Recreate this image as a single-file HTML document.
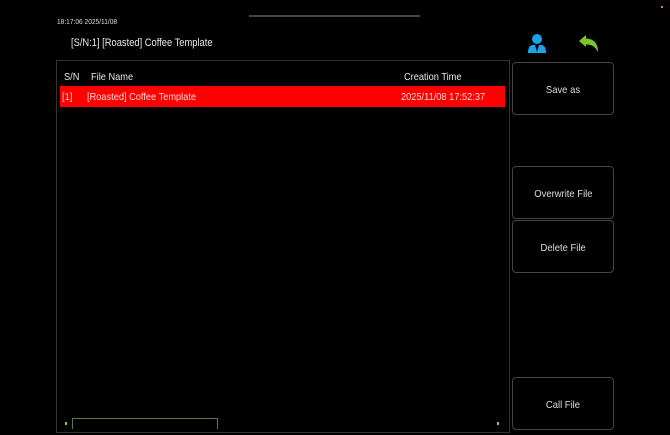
<!DOCTYPE html>
<html><head><style>
body{margin:0;width:670px;height:435px;background:#000;position:relative;overflow:hidden;font-family:"Liberation Sans",sans-serif;color:#e8e8e8}
.a{position:absolute}
.t{font-size:10.5px;transform:scaleX(0.88);transform-origin:left top;white-space:nowrap}
.btn{position:absolute;left:512px;width:100px;border:1px solid #444;border-radius:4px;display:flex;align-items:center;justify-content:center;color:#ddd}
.btn span{font-size:10.5px;transform:scaleX(0.9);display:inline-block;margin-top:2px}
</style></head><body>
<div class="a" style="left:249px;top:15px;width:171px;height:2px;background:#444"></div>
<div class="a" style="left:661px;top:6px;width:2px;height:2px;background:#e08020"></div>
<div class="a" style="left:57px;top:17px;font-size:7.5px;transform:scaleX(0.88);transform-origin:left top;color:#ddd;white-space:nowrap">18:17:06 2025/11/08</div>
<div class="a t" style="left:71px;top:37px;font-size:11px;transform:scaleX(0.85)">[S/N:1] [Roasted] Coffee Template</div>
<svg class="a" style="left:527px;top:33px" width="22" height="21" viewBox="0 0 22 21">
<circle cx="10" cy="6" r="5" fill="#1aa3e8"/>
<path d="M1 20 Q1 12 6 12 L14 12 Q19 12 19 20 Z" fill="#1aa3e8"/>
<path d="M8 12 L10 19 L12 12 Z" fill="#000"/>
</svg>
<svg class="a" style="left:577px;top:34px" width="24" height="20" viewBox="0 0 24 20">
<path d="M2 7 L9 1 L9 4.5 Q21 5 21 18 Q17 10 9 10.5 L9 13 Z" fill="#7ac828"/>
</svg>
<div class="a" style="left:56px;top:60px;width:452px;height:371px;border:1px solid #333"></div>
<div class="a t" style="left:64px;top:71px">S/N</div>
<div class="a t" style="left:91px;top:71px">File Name</div>
<div class="a t" style="left:404px;top:71px">Creation Time</div>
<div class="a" style="left:60px;top:86px;width:445px;height:21px;background:#ff0000"></div>
<div class="a t" style="left:62px;top:91px;color:#ffd8d8">[1]</div>
<div class="a t" style="left:87px;top:91px;color:#ffd8d8">[Roasted] Coffee Template</div>
<div class="a t" style="left:401px;top:91px;color:#ffd8d8">2025/11/08 17:52:37</div>
<div class="a" style="left:72px;top:418px;width:144px;height:10px;border:1px solid #5a7a40;border-bottom:none"></div>
<div class="a" style="left:65px;top:422px;width:2px;height:3px;background:#8c6"></div>
<div class="a" style="left:497px;top:422px;width:2px;height:3px;background:#8c6"></div>
<div class="btn" style="top:62px;height:51px"><span>Save as</span></div>
<div class="btn" style="top:166px;height:51px"><span>Overwrite File</span></div>
<div class="btn" style="top:220px;height:51px"><span>Delete File</span></div>
<div class="btn" style="top:377px;height:51px"><span>Call File</span></div>
</body></html>
